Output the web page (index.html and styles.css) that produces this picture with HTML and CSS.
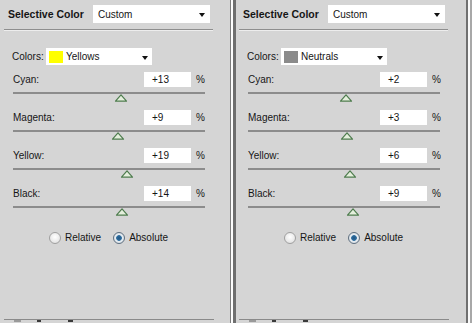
FILE: index.html
```html
<!DOCTYPE html>
<html lang="en">
<head>
  <meta charset="UTF-8">
  <title>Selective Color</title>
  <link rel="stylesheet" href="styles.css">
</head>
<body>
  <div class="frame">

    <!-- left: yellows -->
    <div class="panel first">
      <div class="head">
        <span class="title">Selective Color</span>
        <div class="select wide"><span>Custom</span><i class="arrow"></i></div>
      </div>
      <div class="rule"></div>

      <div class="colors">
        <span class="clabel">Colors:</span>
        <div class="select narrow">
          <span class="swatch yellow"></span><span>Yellows</span><i class="arrow"></i>
        </div>
      </div>

      <div class="adj">
        <div class="adj-top"><span class="name">Cyan:</span><span class="val">+13</span><span class="pct">%</span></div>
        <div class="track"><svg class="thumb" style="left:56.5%" width="13" height="8" viewBox="0 0 13 8"><path d="M6.5 0.8 L12 7.2 L1 7.2 Z" fill="#e4efdc" stroke="#4f7d4f" stroke-width="1.2" stroke-linejoin="round"/></svg></div>
      </div>
      <div class="adj">
        <div class="adj-top"><span class="name">Magenta:</span><span class="val">+9</span><span class="pct">%</span></div>
        <div class="track"><svg class="thumb" style="left:54.5%" width="13" height="8" viewBox="0 0 13 8"><path d="M6.5 0.8 L12 7.2 L1 7.2 Z" fill="#e4efdc" stroke="#4f7d4f" stroke-width="1.2" stroke-linejoin="round"/></svg></div>
      </div>
      <div class="adj">
        <div class="adj-top"><span class="name">Yellow:</span><span class="val">+19</span><span class="pct">%</span></div>
        <div class="track"><svg class="thumb" style="left:59.5%" width="13" height="8" viewBox="0 0 13 8"><path d="M6.5 0.8 L12 7.2 L1 7.2 Z" fill="#e4efdc" stroke="#4f7d4f" stroke-width="1.2" stroke-linejoin="round"/></svg></div>
      </div>
      <div class="adj">
        <div class="adj-top"><span class="name">Black:</span><span class="val">+14</span><span class="pct">%</span></div>
        <div class="track"><svg class="thumb" style="left:57%" width="13" height="8" viewBox="0 0 13 8"><path d="M6.5 0.8 L12 7.2 L1 7.2 Z" fill="#e4efdc" stroke="#4f7d4f" stroke-width="1.2" stroke-linejoin="round"/></svg></div>
      </div>

      <div class="method">
        <span class="radio"></span><span class="rlabel">Relative</span>
        <span class="radio on"></span><span class="rlabel">Absolute</span>
      </div>

      <div class="foot"><i class="m1"></i><i class="m2"></i><i class="m3"></i></div>
    </div>

    <div class="divider"></div>

    <!-- right: neutrals -->
    <div class="panel">
      <div class="head">
        <span class="title">Selective Color</span>
        <div class="select wide"><span>Custom</span><i class="arrow"></i></div>
      </div>
      <div class="rule"></div>

      <div class="colors">
        <span class="clabel">Colors:</span>
        <div class="select narrow">
          <span class="swatch gray"></span><span>Neutrals</span><i class="arrow"></i>
        </div>
      </div>

      <div class="adj">
        <div class="adj-top"><span class="name">Cyan:</span><span class="val">+2</span><span class="pct">%</span></div>
        <div class="track"><svg class="thumb" style="left:51%" width="13" height="8" viewBox="0 0 13 8"><path d="M6.5 0.8 L12 7.2 L1 7.2 Z" fill="#e4efdc" stroke="#4f7d4f" stroke-width="1.2" stroke-linejoin="round"/></svg></div>
      </div>
      <div class="adj">
        <div class="adj-top"><span class="name">Magenta:</span><span class="val">+3</span><span class="pct">%</span></div>
        <div class="track"><svg class="thumb" style="left:51.5%" width="13" height="8" viewBox="0 0 13 8"><path d="M6.5 0.8 L12 7.2 L1 7.2 Z" fill="#e4efdc" stroke="#4f7d4f" stroke-width="1.2" stroke-linejoin="round"/></svg></div>
      </div>
      <div class="adj">
        <div class="adj-top"><span class="name">Yellow:</span><span class="val">+6</span><span class="pct">%</span></div>
        <div class="track"><svg class="thumb" style="left:53%" width="13" height="8" viewBox="0 0 13 8"><path d="M6.5 0.8 L12 7.2 L1 7.2 Z" fill="#e4efdc" stroke="#4f7d4f" stroke-width="1.2" stroke-linejoin="round"/></svg></div>
      </div>
      <div class="adj">
        <div class="adj-top"><span class="name">Black:</span><span class="val">+9</span><span class="pct">%</span></div>
        <div class="track"><svg class="thumb" style="left:54.5%" width="13" height="8" viewBox="0 0 13 8"><path d="M6.5 0.8 L12 7.2 L1 7.2 Z" fill="#e4efdc" stroke="#4f7d4f" stroke-width="1.2" stroke-linejoin="round"/></svg></div>
      </div>

      <div class="method">
        <span class="radio"></span><span class="rlabel">Relative</span>
        <span class="radio on"></span><span class="rlabel">Absolute</span>
      </div>

      <div class="foot"><i class="m1"></i><i class="m2"></i><i class="m3"></i></div>
    </div>

    <div class="edge"></div>
  </div>
</body>
</html>
```

FILE: styles.css
```css
body {
  margin: 0;
  background-color: #d5d5d5;
  font-family: "Liberation Sans", Arial, sans-serif;
  font-size: 10px;
  color: #151515;
}
.frame {
  display: flex;
  width: 472px;
  height: 323px;
  overflow: hidden;
}
.panel {
  width: 230px;
  flex: none;
  display: flex;
  flex-direction: column;
}
.panel.first {
  border-left: 1px solid #e2e2e2;
  width: 229px;
  margin-left: -1px;
  padding-left: 1px;
}
.divider {
  width: 6px;
  flex: none;
  box-sizing: border-box;
  border-left: 1px solid #7c7c7c;
  border-right: 3px solid #6f6f6f;
  background-color: #fdfdfd;
}
.edge {
  width: 6px;
  flex: none;
  box-sizing: border-box;
  border-left: 2px solid #707070;
  border-right: 2px solid #a8a8a8;
  background-color: #fafafa;
}

/* header */
.head {
  display: flex;
  align-items: center;
  height: 18px;
  margin-top: 5px;
  padding-left: 7px;
}
.title {
  width: 85px;
  font-weight: bold;
  font-size: 10.5px;
}
.select {
  position: relative;
  display: flex;
  align-items: center;
  background-color: #fff;
  box-sizing: border-box;
}
.select.wide {
  width: 117px;
  height: 18px;
  padding-left: 5px;
}
.select.narrow {
  width: 106px;
  height: 17px;
  padding-left: 3px;
}
.arrow {
  position: absolute;
  right: 5px;
  top: 7px;
  width: 0;
  height: 0;
  border-left: 3.5px solid transparent;
  border-right: 3.5px solid transparent;
  border-top: 4px solid #111;
}
.select.wide .arrow { right: 5px; top: 8px; }
.select.narrow .arrow { right: 4px; top: 8px; }
.rule {
  margin: 6px 0 0 3px;
  width: 209px;
  border-top: 1px solid #8e8e8e;
  border-bottom: 1px solid #ededed;
}

/* colors row */
.colors {
  display: flex;
  align-items: center;
  margin-top: 17px;
  padding-left: 11px;
}
.clabel {
  width: 34px;
}
.swatch {
  width: 14px;
  height: 12px;
  margin-right: 3px;
}
.swatch.yellow { background-color: #ffff00; }
.swatch.gray { background-color: #8b8b8b; }

/* slider rows */
.adj {
  height: 38px;
}
.colors + .adj {
  margin-top: 7px;
}
.adj-top {
  display: flex;
  align-items: center;
  height: 15px;
  padding: 0 15px 0 12px;
}
.name {
  flex: 1;
}
.val {
  width: 47px;
  height: 15px;
  line-height: 15px;
  box-sizing: border-box;
  padding-left: 8px;
  background-color: #fff;
}
.pct {
  width: 24px;
  padding-left: 5px;
  box-sizing: border-box;
}
.track {
  position: relative;
  margin: 5px 0 0 12px;
  width: 192px;
  height: 2px;
  background-color: #8c8c8c;
}
.thumb {
  position: absolute;
  top: 2px;
  transform: translateX(-50%);
}

/* method */
.method {
  display: flex;
  align-items: center;
  margin-top: 7px;
  padding-left: 48px;
  height: 13px;
}
.radio {
  width: 12px;
  height: 12px;
  border-radius: 50%;
  box-sizing: border-box;
  border: 1px solid #a0a0a0;
  background: radial-gradient(circle at 50% 40%, #ffffff 0%, #e6e6e6 70%, #cfcfcf 100%);
}
.radio.on {
  border-color: #5f6f7f;
  background: radial-gradient(circle, #1f5585 0%, #2e6d9e 35%, #e8eef3 45%, #c9d2da 100%);
}
.rlabel {
  margin-left: 4px;
  margin-right: 12px;
}

/* cut-off bottom strip */
.foot {
  position: relative;
  margin-top: auto;
  margin-left: 3px;
  width: 210px;
  height: 3px;
  border-top: 1px solid #8a8a8a;
}
.foot i {
  position: absolute;
  top: 0;
  height: 2px;
  background-color: #3a3a3a;
}
.foot .m1 { left: 10px; width: 7px; background-color: #9a9a9a; }
.foot .m2 { left: 33px; width: 4px; }
.foot .m3 { left: 64px; width: 5px; }
```
